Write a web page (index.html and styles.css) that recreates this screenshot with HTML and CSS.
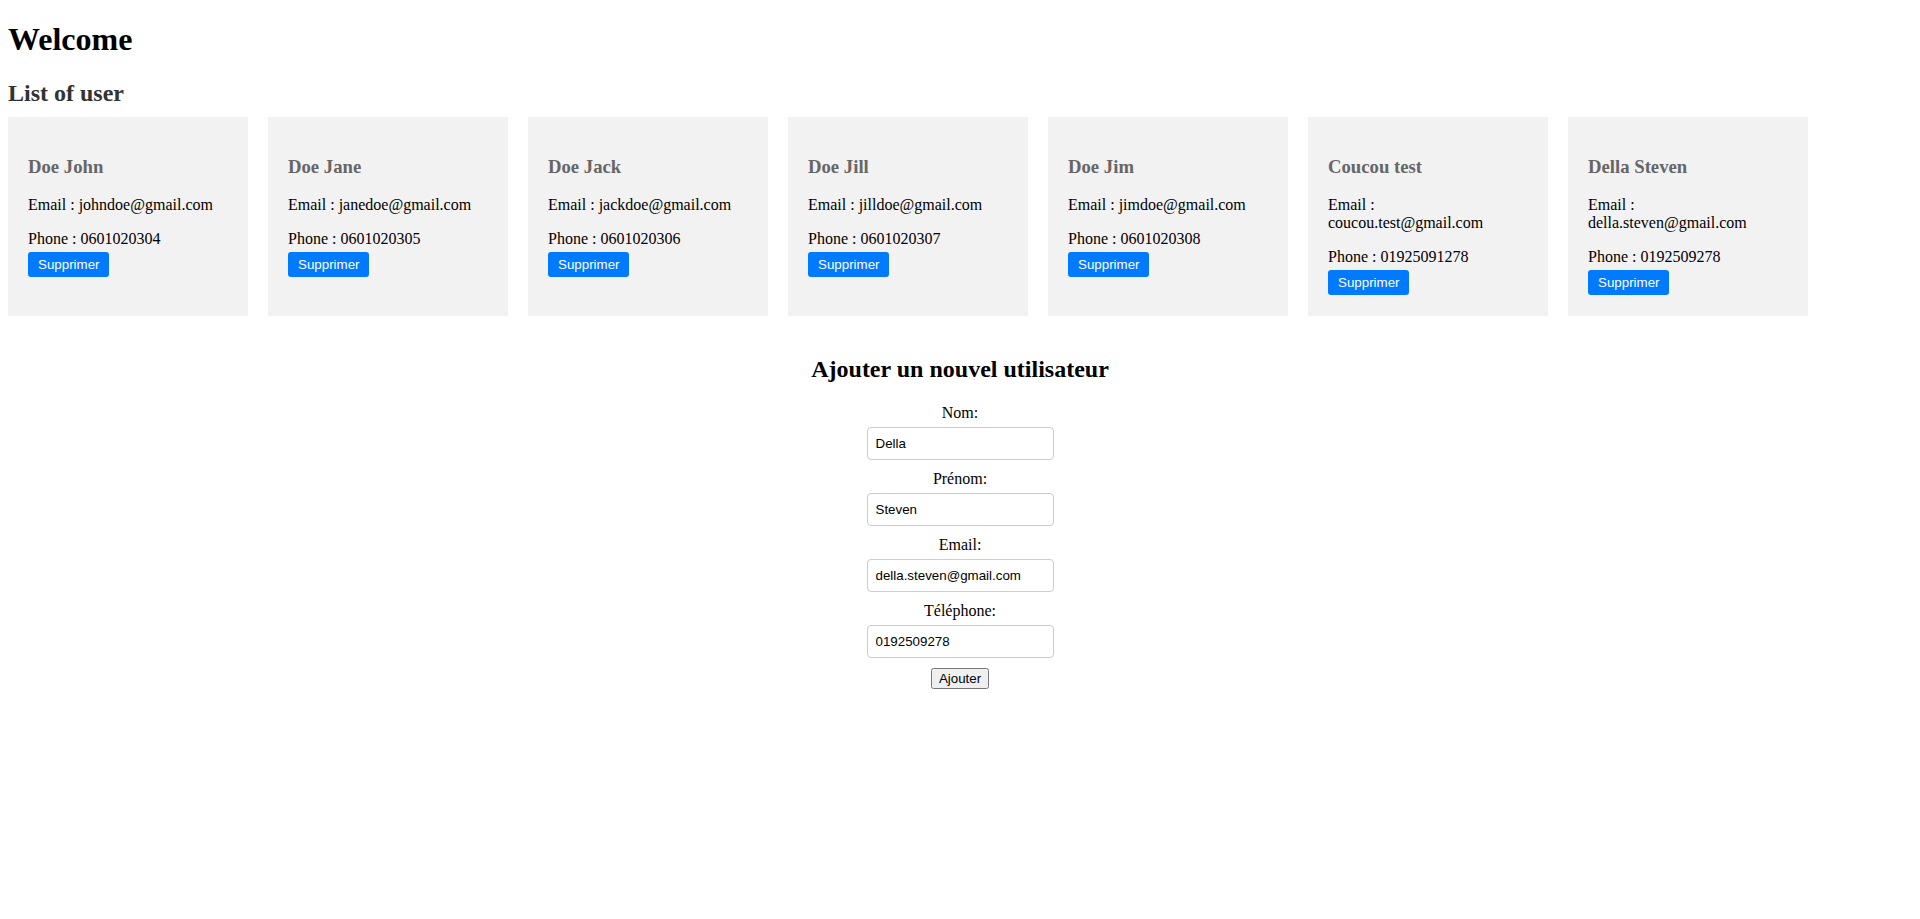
FILE: index.html
```html
<!DOCTYPE html>
<html lang="fr">
<head>
<meta charset="utf-8">
<title>Welcome</title>
<link rel="stylesheet" href="styles.css">
</head>
<body>
<h1 class="title">Welcome</h1>
<h2 class="list-title">List of user</h2>
<div class="cards">
  <div class="card">
    <h3 class="card-name">Doe John</h3>
    <p class="card-line">Email : johndoe@gmail.com</p>
    <p class="card-line phone">Phone : 0601020304</p>
    <button class="btn-delete">Supprimer</button>
  </div>
  <div class="card">
    <h3 class="card-name">Doe Jane</h3>
    <p class="card-line">Email : janedoe@gmail.com</p>
    <p class="card-line phone">Phone : 0601020305</p>
    <button class="btn-delete">Supprimer</button>
  </div>
  <div class="card">
    <h3 class="card-name">Doe Jack</h3>
    <p class="card-line">Email : jackdoe@gmail.com</p>
    <p class="card-line phone">Phone : 0601020306</p>
    <button class="btn-delete">Supprimer</button>
  </div>
  <div class="card">
    <h3 class="card-name">Doe Jill</h3>
    <p class="card-line">Email : jilldoe@gmail.com</p>
    <p class="card-line phone">Phone : 0601020307</p>
    <button class="btn-delete">Supprimer</button>
  </div>
  <div class="card">
    <h3 class="card-name">Doe Jim</h3>
    <p class="card-line">Email : jimdoe@gmail.com</p>
    <p class="card-line phone">Phone : 0601020308</p>
    <button class="btn-delete">Supprimer</button>
  </div>
  <div class="card">
    <h3 class="card-name">Coucou test</h3>
    <p class="card-line">Email : coucou.test@gmail.com</p>
    <p class="card-line phone">Phone : 01925091278</p>
    <button class="btn-delete">Supprimer</button>
  </div>
  <div class="card">
    <h3 class="card-name">Della Steven</h3>
    <p class="card-line">Email : della.steven@gmail.com</p>
    <p class="card-line phone">Phone : 0192509278</p>
    <button class="btn-delete">Supprimer</button>
  </div>
</div>

<h2 class="form-title">Ajouter un nouvel utilisateur</h2>
<form class="user-form">
  <label class="form-label" for="nom">Nom:</label>
  <input class="form-input" id="nom" type="text" value="Della">
  <label class="form-label" for="prenom">Prénom:</label>
  <input class="form-input" id="prenom" type="text" value="Steven">
  <label class="form-label" for="email">Email:</label>
  <input class="form-input" id="email" type="email" value="della.steven@gmail.com">
  <label class="form-label" for="tel">Téléphone:</label>
  <input class="form-input" id="tel" type="text" value="0192509278">
  <button class="btn-submit" type="button">Ajouter</button>
</form>
</body>
</html>
```
FILE: styles.css
```css
body {
  margin: 0 8px 8px;
  font-family: "Liberation Serif", "Times New Roman", serif;
  font-size: 16px;
  color: #000;
  background: #fff;
}

.title {
  font-size: 32px;
  margin: 21.44px 0;
}

.list-title {
  font-size: 24px;
  color: #333;
  margin: 19.92px 0 10px;
}

.cards {
  display: flex;
  gap: 20px;
  margin-bottom: 40px;
}

.card {
  width: 240px;
  box-sizing: border-box;
  padding: 20px 20px 21px;
  background: #f2f2f2;
}

.card-name {
  font-size: 18.72px;
  color: #666;
  margin: 19.5px 0 18px;
}

.card-line {
  margin: 16px 0;
}

.card-line.phone {
  margin-bottom: 4px;
}

.btn-delete {
  display: inline-block;
  background: #007bff;
  color: #fff;
  border: none;
  border-radius: 3px;
  padding: 5px 10px;
  font-family: "Liberation Sans", Arial, sans-serif;
  font-size: 13.333px;
  line-height: 15px;
  cursor: pointer;
}

.form-title {
  font-size: 24px;
  text-align: center;
  margin: 19.92px 0 21px;
}

.user-form {
  display: flex;
  flex-direction: column;
  align-items: center;
}

.form-label {
  margin-bottom: 5px;
}

.form-input {
  box-sizing: border-box;
  width: 187px;
  height: 33px;
  padding: 8px;
  border: 1px solid #ccc;
  border-radius: 4px;
  font-family: "Liberation Sans", Arial, sans-serif;
  font-size: 13.333px;
  margin: 0 0 10px;
}

.btn-submit {
  font-family: "Liberation Sans", Arial, sans-serif;
  font-size: 13.333px;
  margin-top: 0;
}
```
